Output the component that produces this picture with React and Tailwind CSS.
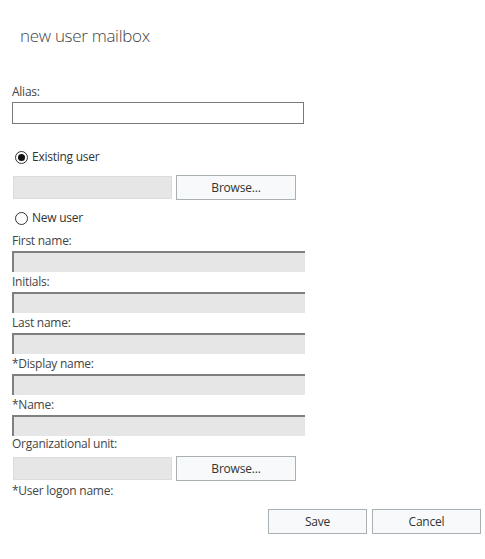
import React from "react";

const font = { fontFamily: '"Open Sans", "Noto Sans", sans-serif' };

// Radio button drawn with plain css circles
const Radio = ({ checked, label }) => (
  <div className="flex items-center h-[16px] pl-[3px]">
    <span className="w-[13px] h-[13px] rounded-full border border-[#333] bg-white flex items-center justify-center">
      {checked && <span className="w-[7px] h-[7px] rounded-full bg-[#111]" />}
    </span>
    <span className="ml-[4px] text-[12px] leading-[16px] tracking-[-0.25px] text-[#333]">{label}</span>
  </div>
);

const Label = ({ children, className = "" }) => (
  <div className={`text-[12px] leading-[16px] tracking-[-0.25px] text-[#444] ${className}`}>{children}</div>
);

const DisabledInput = () => (
  <div className="w-[293px] h-[21px] mt-[2px] bg-[#e6e6e6] border-t-2 border-l-2 border-[#7f7f7f]" />
);

const Field = ({ label, first }) => (
  <div className={first ? "" : "mt-[2px]"}>
    <Label>{label}</Label>
    <DisabledInput />
  </div>
);

const BrowseRow = ({ className = "" }) => (
  <div className={`flex items-center h-[25px] ${className}`}>
    <div className="ml-[1px] w-[159px] h-[23px] bg-[#e6e6e6] border border-[#dcdcdc]" />
    <button className="ml-[4px] w-[120px] h-[25px] bg-[#f8f9fa] border border-[#a9b0b3] text-[12px] tracking-[-0.2px] text-[#333]">
      Browse...
    </button>
  </div>
);

export default function App() {
  return (
    <div className="w-[485px] h-[559px] bg-white overflow-hidden" style={font}>
      <div className="pt-[24px] pl-[20px] text-[17px] leading-[24px] tracking-[-0.3px] font-light text-[#444]">
        new user mailbox
      </div>

      <div className="pl-[12px] mt-[36px]">
        <Label>Alias:</Label>
        <div className="w-[292px] h-[22px] mt-[2px] border border-[#7a7a7a] bg-white" />

        <div className="mt-[25px]">
          <Radio checked label="Existing user" />
        </div>
        <BrowseRow className="mt-[10px]" />

        <div className="mt-[10px]">
          <Radio label="New user" />
        </div>

        <div className="mt-[7px]">
          <Field first label="First name:" />
          <Field label="Initials:" />
          <Field label="Last name:" />
          <Field label="*Display name:" />
          <Field label="*Name:" />
        </div>

        <Label>Organizational unit:</Label>
        <BrowseRow className="mt-[4px]" />

        <Label className="mt-[2px]">*User logon name:</Label>
      </div>

      <div className="flex justify-end gap-[5px] pr-[4px] mt-[10px]">
        <button className="w-[99px] h-[25px] bg-[#f8f9fa] border border-[#a9b0b3] text-[12px] tracking-[-0.2px] text-[#333]">
          Save
        </button>
        <button className="w-[109px] h-[25px] bg-[#f8f9fa] border border-[#a9b0b3] text-[12px] tracking-[-0.2px] text-[#333]">
          Cancel
        </button>
      </div>
    </div>
  );
}
